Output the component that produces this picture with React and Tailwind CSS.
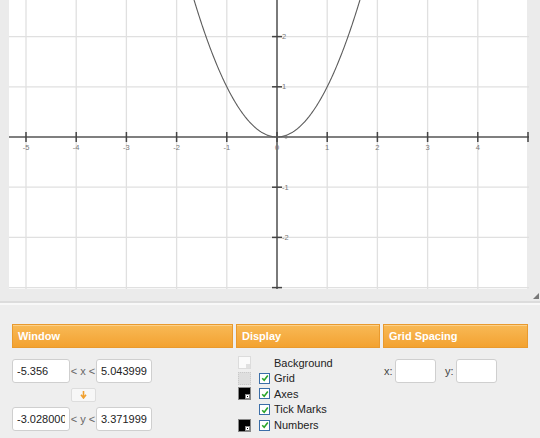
import React from 'react';

const U = 50.2;
const OX = 268;
const OY = 137;

const px = (x) => OX + U * x;
const py = (y) => OY - U * y;

// curve y = x^2
const curvePath = () => {
  const pts = [];
  for (let i = -180; i <= 180; i++) {
    const x = i / 100;
    pts.push(`${px(x).toFixed(2)},${py(x * x).toFixed(2)}`);
  }
  return 'M' + pts.join(' L');
};

const Graph = () => {
  const xs = [-5, -4, -3, -2, -1, 0, 1, 2, 3, 4, 5];
  const ys = [3, 2, 1, -1, -2, -3];
  return (
    <svg width="520" height="289" viewBox="0 0 520 289" className="block">
      {xs.map((k) => (
        <line key={'gx' + k} x1={px(k)} y1="0" x2={px(k)} y2="289" stroke="#e0e0e0" strokeWidth="1.3" />
      ))}
      {ys.map((k) => (
        <line key={'gy' + k} x1="0" y1={py(k)} x2="520" y2={py(k)} stroke="#e0e0e0" strokeWidth="1.3" />
      ))}
      <line x1="0" y1={OY} x2="520" y2={OY} stroke="#555" strokeWidth="1.5" />
      <line x1={OX} y1="0" x2={OX} y2="289" stroke="#555" strokeWidth="1.5" />
      {xs.map((k) => (
        <line key={'tx' + k} x1={px(k)} y1={OY - 5} x2={px(k)} y2={OY + 5} stroke="#444" strokeWidth="1.5" />
      ))}
      {[2, 1, -1, -2, -3].map((k) => (
        <line key={'ty' + k} x1={OX - 5} y1={py(k)} x2={OX + 5} y2={py(k)} stroke="#444" strokeWidth="1.5" />
      ))}
      {xs.filter((k) => k !== 5).map((k) => (
        <text key={'lx' + k} x={px(k)} y={OY + 13} fontSize="7.5" fill="#777" textAnchor="middle" fontFamily="Liberation Sans, sans-serif">
          {k}
        </text>
      ))}
      {[2, 1, -1, -2].map((k) => (
        <text key={'ly' + k} x={OX + 5} y={py(k) + 2.5} fontSize="7.5" fill="#777" fontFamily="Liberation Sans, sans-serif">
          {k}
        </text>
      ))}
      <path d={curvePath()} fill="none" stroke="#5c5c5c" strokeWidth="1.1" />
      <circle cx={OX + 9} cy={OY} r="1.6" fill="#777" />
    </svg>
  );
};

const Header = ({ children, w }) => (
  <div
    className={`${w} h-[24px] flex items-center pl-[5px] text-white font-bold text-[11px] border border-[#e99a2e] bg-gradient-to-b from-[#f8b955] to-[#f3a22f] shadow-[inset_0_1px_0_#fbd08a]`}
  >
    {children}
  </div>
);

const Field = ({ value, w }) => (
  <input
    readOnly
    value={value}
    className={`${w} h-[24px] bg-white border border-[#cfcfcf] rounded-[3px] px-[4px] text-[11px] text-[#222] outline-none font-['Liberation_Sans',Arial,sans-serif]`}
  />
);

const Swatch = ({ kind }) => {
  if (kind === 'none') return <div className="w-[13px] h-[13px]" />;
  if (kind === 'bg')
    return (
      <div className="w-[13px] h-[13px] border border-[#dcdcdc] bg-[#fafafa] relative">
        <div className="absolute right-0 bottom-0 w-[4px] h-[4px] bg-[#e0e0e0]" />
      </div>
    );
  if (kind === 'grid')
    return <div className="w-[13px] h-[13px] border border-dotted border-[#c9c9c9] bg-[#dedede]" />;
  return (
    <div className="w-[13px] h-[13px] border border-[#888] bg-black relative">
      <div className="absolute right-0 bottom-0 w-[5px] h-[5px] bg-white border border-[#888] flex items-center justify-center">
        <div className="w-[1px] h-[1px] bg-black" />
      </div>
    </div>
  );
};

const Check = () => (
  <div className="w-[11px] h-[11px] border border-[#3b6ea8] bg-white flex items-center justify-center">
    <svg width="8" height="8" viewBox="0 0 8 8">
      <path d="M1.2 4.2 L3.2 6.2 L6.8 1.6" fill="none" stroke="#2aa52a" strokeWidth="1.6" />
    </svg>
  </div>
);

const DisplayRow = ({ swatch, check, label }) => (
  <div className="h-[15.6px] flex items-center">
    <div className="ml-[2px] w-[13px]">
      <Swatch kind={swatch} />
    </div>
    <div className="ml-[8px] w-[11px]">{check && <Check />}</div>
    <div className="ml-[4px] text-[11px] text-[#222]">{label}</div>
  </div>
);

export default function App() {
  return (
    <div className="w-[540px] h-[438px] overflow-hidden bg-[#eeeeee] font-['Liberation_Sans',Arial,sans-serif]">
      <div className="h-[301px] bg-[#ebebeb] relative">
        <div className="ml-[9px] w-[520px] h-[289px] bg-white">
          <Graph />
        </div>
        <div className="absolute right-[1px] bottom-[2px] w-0 h-0 border-l-[6px] border-l-transparent border-b-[6px] border-b-[#777]" />
      </div>
      <div className="h-[2px] bg-[#dcdcdc]" />
      <div className="h-[2px] bg-[#f8f8f8]" />
      <div className="flex pl-[12px] pt-[19px] gap-[3px]">
        <div className="w-[221px]">
          <Header w="w-[221px]">Window</Header>
          <div className="mt-[11px] flex items-center">
            <Field value="-5.356" w="w-[58px]" />
            <div className="w-[26px] text-center text-[11px] text-[#666]">&lt; x &lt;</div>
            <Field value="5.0439999999" w="w-[56px]" />
          </div>
          <div className="mt-[5px] ml-[59px] w-[25px] h-[14px] bg-[#f7f7f7] border border-[#dddddd] rounded-[2px] flex items-center justify-center">
            <svg width="7" height="8" viewBox="0 0 7 8">
              <path d="M3.5 0 V6 M1 3.8 L3.5 7 L6 3.8" fill="none" stroke="#f0a030" strokeWidth="1.6" />
            </svg>
          </div>
          <div className="mt-[5px] flex items-center">
            <Field value="-3.0280000000" w="w-[58px]" />
            <div className="w-[26px] text-center text-[11px] text-[#666]">&lt; y &lt;</div>
            <Field value="3.3719999999" w="w-[56px]" />
          </div>
        </div>
        <div className="w-[144px]">
          <Header w="w-[144px]">Display</Header>
          <div className="mt-[7px]">
            <DisplayRow swatch="bg" label="Background" />
            <DisplayRow swatch="grid" check label="Grid" />
            <DisplayRow swatch="black" check label="Axes" />
            <DisplayRow swatch="none" check label="Tick Marks" />
            <DisplayRow swatch="black" check label="Numbers" />
          </div>
        </div>
        <div className="w-[145px]">
          <Header w="w-[145px]">Grid Spacing</Header>
          <div className="mt-[11px] flex items-center text-[11px] text-[#444]">
            <span className="ml-[1px] w-[11px]">x:</span>
            <Field value="" w="w-[41px]" />
            <span className="ml-[9px] w-[11px]">y:</span>
            <Field value="" w="w-[41px]" />
          </div>
        </div>
      </div>
    </div>
  );
}
